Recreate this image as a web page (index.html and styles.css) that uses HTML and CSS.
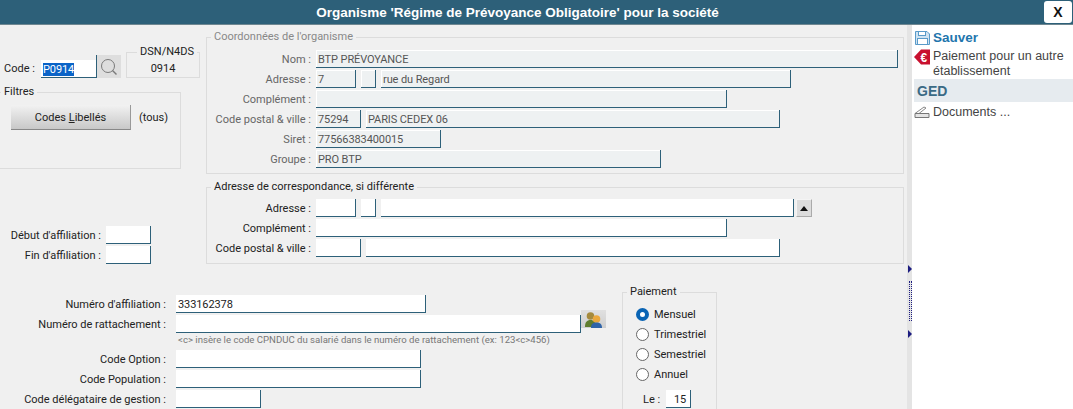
FILE: index.html
```html
<!DOCTYPE html>
<html lang="fr">
<head>
    <meta charset="UTF-8">
    <title>Organisme</title>
    <link rel="stylesheet" href="styles.css">
</head>
<body>
    <div class="titlebar">
        <div class="title">Organisme 'Régime de Prévoyance Obligatoire' pour la société</div>
        <div class="close">X</div>
    </div>

    <div class="main">
        <div class="form">
            <div class="upper">
                <div class="left-col">
                    <div class="code-row">
                        <span class="code-label">Code :</span>
                        <div class="field code-field"><span class="selected">P0914</span></div>
                        <div class="search-btn">
                            <svg width="18" height="18" viewBox="0 0 18 18"><circle cx="8" cy="8" r="6.500" fill="none" stroke="#7a7a7a" stroke-width="1"/><path d="M12.500 12.500L16.500 16.500" stroke="#7a7a7a" stroke-width="1.500"/></svg>
                        </div>
                        <fieldset class="dsn">
                            <legend>DSN/N4DS</legend>
                            <div>0914</div>
                        </fieldset>
                    </div>
                    <fieldset class="filtres">
                        <legend>Filtres</legend>
                        <div class="filtres-row">
                            <div class="big-btn">Codes <u>L</u>ibellés</div>
                            <span>(tous)</span>
                        </div>
                    </fieldset>
                    <div class="dates">
                        <div class="row"><label class="lbl-date">Début d'affiliation :</label><div class="field w45"></div></div>
                        <div class="row"><label class="lbl-date">Fin d'affiliation :</label><div class="field w45"></div></div>
                    </div>
                </div>

                <div class="right-col">
                    <fieldset class="coord">
                        <legend>Coordonnées de l'organisme</legend>
                        <div class="row"><label class="lbl">Nom :</label><div class="field off w582">BTP PRÉVOYANCE</div></div>
                        <div class="row"><label class="lbl">Adresse :</label><div class="field off w40">7</div><div class="field off w15"></div><div class="field off w410">rue du Regard</div></div>
                        <div class="row"><label class="lbl">Complément :</label><div class="field off w411"></div></div>
                        <div class="row"><label class="lbl">Code postal &amp; ville :</label><div class="field off w45">75294</div><div class="field off w414">PARIS CEDEX 06</div></div>
                        <div class="row"><label class="lbl">Siret :</label><div class="field off w125">77566383400015</div></div>
                        <div class="row"><label class="lbl">Groupe :</label><div class="field off w345">PRO BTP</div></div>
                    </fieldset>
                    <fieldset class="corresp">
                        <legend>Adresse de correspondance, si différente</legend>
                        <div class="row"><label class="lbl">Adresse :</label><div class="field w40"></div><div class="field w15"></div><div class="field w413"></div>
                            <div class="up-btn"><svg width="8" height="5" viewBox="0 0 8 5"><path d="M4 0L8 5H0Z" fill="#111"/></svg></div>
                        </div>
                        <div class="row"><label class="lbl">Complément :</label><div class="field w411"></div></div>
                        <div class="row"><label class="lbl">Code postal &amp; ville :</label><div class="field w45"></div><div class="field w414"></div></div>
                    </fieldset>
                </div>
            </div>

            <div class="lower">
                <div class="affil">
                    <div class="row"><label class="lbl-aff">Numéro d'affiliation :</label><div class="field w250">333162378</div></div>
                    <div class="row"><label class="lbl-aff">Numéro de rattachement :</label><div class="field w405"></div>
                        <div class="people-btn">
                            <svg width="25" height="18" viewBox="0 0 25 18"><circle cx="9.500" cy="6" r="3.800" fill="#a58a3c"/><path d="M4 17c0-5 2-7 5.500-7s5.500 2 5.500 7Z" fill="#5f7d2e"/><circle cx="15.500" cy="9" r="3.800" fill="#eaa83c"/><path d="M10 18c0-4 2-5.500 5.500-5.500s5.500 1.500 5.500 5.500Z" fill="#2f64a8"/></svg>
                        </div>
                    </div>
                    <div class="hint">&lt;c&gt; insère le code CPNDUC du salarié dans le numéro de rattachement (ex: 123&lt;c&gt;456)</div>
                    <div class="row"><label class="lbl-aff">Code Option :</label><div class="field w245"></div></div>
                    <div class="row"><label class="lbl-aff">Code Population :</label><div class="field w245"></div></div>
                    <div class="row"><label class="lbl-aff">Code délégataire de gestion :</label><div class="field w85"></div></div>
                </div>
                <fieldset class="paiement">
                    <legend>Paiement</legend>
                    <div class="radio-row"><span class="radio on"></span>Mensuel</div>
                    <div class="radio-row"><span class="radio"></span>Trimestriel</div>
                    <div class="radio-row"><span class="radio"></span>Semestriel</div>
                    <div class="radio-row"><span class="radio"></span>Annuel</div>
                    <div class="le-row"><span>Le :</span><div class="field w25 num">15</div></div>
                </fieldset>
            </div>
        </div>

        <div class="strip">
            <span class="arrow"></span>
            <span class="dots"></span>
            <span class="arrow"></span>
        </div>

        <div class="sidebar">
            <div class="side-item sauver">
                <svg class="side-icon" width="19" height="16" viewBox="0 0 19 16"><path d="M1.500 1.500H13L15.500 4V14.500H1.500Z" fill="#cfe3f2" stroke="#5a9bc9"/><rect x="4.500" y="1.500" width="7" height="4" fill="#fff" stroke="#5a9bc9"/><rect x="3.500" y="8.500" width="10" height="6" fill="#fff" stroke="#5a9bc9"/></svg>
                <span>Sauver</span>
            </div>
            <div class="side-item paie">
                <svg class="side-icon" width="19" height="16" viewBox="0 0 19 16"><path d="M0 8L7 .5H16V15.500H7Z" fill="#c8102e"/><text x="6.500" y="13" font-family="Liberation Sans" font-size="12" font-weight="700" fill="#fff">€</text></svg>
                <span>Paiement pour un autre établissement</span>
            </div>
            <div class="ged">GED</div>
            <div class="side-item docs">
                <svg class="side-icon" width="19" height="14" viewBox="0 0 19 14"><path d="M1 8.500L10 2l2 1-7 5.500" fill="#fff" stroke="#888"/><path d="M1 8.500H15V12.500H1Z" fill="#e4e4e4" stroke="#777"/></svg>
                <span>Documents ...</span>
            </div>
        </div>
    </div>
</body>
</html>
```
FILE: styles.css
```css
html, body {
    margin: 0;
    height: 409px;
    overflow: hidden;
}
body {
    font-family: Roboto, 'Liberation Sans', sans-serif;
    font-size: 11px;
    color: #222;
    background: #f0f0f0;
}
.titlebar {
    height: 24px;
    background: #2d6079;
    border-bottom: 1px solid #6f8791;
    display: flex;
    align-items: center;
    font-family: 'Liberation Sans', sans-serif;
}
.title {
    width: 1035px;
    text-align: center;
    color: white;
    font-weight: bold;
    font-size: 13.5px;
}
.close {
    width: 28px;
    height: 22px;
    margin-left: 9px;
    background: white;
    border-radius: 3px;
    text-align: center;
    line-height: 22px;
    font-weight: bold;
    font-size: 14px;
    color: #111;
}
.main {
    display: flex;
    height: 384px;
}
.form {
    width: 907px;
    flex: none;
}
.upper {
    display: flex;
    height: 240px;
}
.left-col {
    width: 206px;
    flex: none;
}
.right-col {
    width: 698px;
}
fieldset {
    margin: 0;
    padding: 0;
    border: 1px solid #dcdcdc;
    min-width: 0;
}
legend {
    padding: 0 3px;
    line-height: 14px;
    margin-left: 4px;
}

/* champs */
.row {
    display: flex;
    height: 18px;
    margin-bottom: 2px;
    gap: 5px;
    align-items: flex-start;
}
.field {
    height: 18px;
    box-sizing: border-box;
    background: white;
    border-right: 1px solid #2d6079;
    border-bottom: 1px solid #2d6079;
    padding-left: 2px;
    line-height: 19px;
    letter-spacing: -0.1px;
    flex: none;
    white-space: nowrap;
}
.field.off {
    background: #eef1f2;
    color: #555;
    box-shadow: inset 1px 1px 0 white;
}
.w15 { width: 15px; }
.w25 { width: 25px; }
.w40 { width: 40px; }
.w45 { width: 45px; }
.w85 { width: 85px; }
.w125 { width: 125px; }
.w245 { width: 245px; }
.w250 { width: 250px; }
.w345 { width: 345px; }
.w405 { width: 405px; }
.w410 { width: 410px; }
.w411 { width: 411px; }
.w413 { width: 413px; }
.w414 { width: 414px; }
.w582 { width: 582px; }
.lbl {
    width: 104px;
    text-align: right;
    white-space: nowrap;
    line-height: 19px;
}
.lbl-date {
    width: 101px;
    text-align: right;
    white-space: nowrap;
    line-height: 19px;
}
.lbl-aff {
    width: 166px;
    margin-right: 5px;
    text-align: right;
    white-space: nowrap;
    line-height: 19px;
}

/* colonne gauche */
.code-row {
    display: flex;
    align-items: flex-end;
    height: 53px;
}
.code-label {
    margin-left: 4px;
    width: 37px;
    line-height: 18px;
}
.code-field {
    width: 55px;
    height: 18px;
    padding-left: 2px;
    border-right: none;
}
.selected {
    background: #0a64c8;
    color: white;
}
.search-btn {
    width: 25px;
    height: 23px;
    background: #dedede;
    border-left: 1px solid #2d6079;
    box-sizing: border-box;
    display: flex;
    align-items: center;
    justify-content: center;
}
.dsn {
    width: 74px;
    height: 34px;
    margin-left: 5px;
    box-sizing: border-box;
    text-align: center;
}
.dsn legend {
    margin-left: 4px;
    line-height: 16px;
}
.dsn div {
    line-height: 16px;
    margin-top: 1px;
}
.filtres {
    width: 185px;
    height: 84px;
    margin: 7px 0 0 -4px;
    box-sizing: border-box;
}
.filtres-row {
    display: flex;
    align-items: center;
    gap: 8px;
    margin: 6px 0 0 14px;
}
.big-btn {
    width: 120px;
    height: 25px;
    line-height: 26px;
    text-align: center;
    background: linear-gradient(#f2f2f2, #c8c8c8);
    border-bottom: 1px solid #888;
    border-right: 1px solid #999;
    box-sizing: border-box;
}
.dates {
    margin-top: 57px;
}

/* colonne droite */
.coord {
    margin-top: 5px;
    height: 144px;
    box-sizing: border-box;
    color: #666;
    padding-top: 6px;
}
.coord legend {
    color: #888;
}
.corresp {
    margin-top: 6px;
    height: 84px;
    box-sizing: border-box;
    padding-top: 5px;
}
.up-btn {
    width: 16px;
    height: 18px;
    margin-left: -3px;
    background: #dcdcdc;
    box-sizing: border-box;
    border: 1px solid #f4f4f4;
    border-right-color: #aaa;
    border-bottom-color: #aaa;
    display: flex;
    align-items: center;
    justify-content: center;
}

/* partie basse */
.lower {
    display: flex;
    margin-top: 30px;
}
.affil {
    width: 622px;
    flex: none;
}
.people-btn {
    width: 25px;
    height: 18px;
    margin: -5px 0 0 -5px;
    background: linear-gradient(#e0e0e0, #cfcfcf);
    overflow: hidden;
}
.hint {
    font-size: 9.6px;
    color: #777;
    margin-left: 178px;
    height: 15px;
    line-height: 10px;
}
.paiement {
    width: 95px;
    height: 140px;
    box-sizing: border-box;
    margin-top: -10px;
}
.radio-row {
    display: flex;
    align-items: center;
    height: 20px;
    margin-left: 13px;
    gap: 5px;
}
.radio-row:first-of-type {
    margin-top: 5px;
}
.radio {
    width: 11px;
    height: 11px;
    border: 1px solid #666;
    border-radius: 50%;
    background: white;
    flex: none;
}
.radio.on {
    border: 4px solid #0a64b4;
    width: 5px;
    height: 5px;
}
.le-row {
    display: flex;
    align-items: center;
    gap: 6px;
    margin: 6px 0 0 20px;
}
.num {
    text-align: right;
    padding-right: 4px;
}

/* bandeau et menu de droite */
.strip {
    width: 5px;
    flex: none;
    box-sizing: border-box;
    background: #e4e4e4;
    display: flex;
    flex-direction: column;
    align-items: flex-start;
    padding: 240px 0 0 1px;
    gap: 8px;
}
.arrow {
    width: 0;
    height: 0;
    border-left: 4px solid #1c1c80;
    border-top: 4px solid transparent;
    border-bottom: 4px solid transparent;
}
.dots {
    width: 3px;
    height: 40px;
    margin: 0 0 1px 1px;
    border-left: 1px dotted #1c1c80;
    border-right: 1px dotted #1c1c80;
    box-sizing: border-box;
}
.sidebar {
    flex: 1;
    background: white;
    padding-top: 5px;
    padding-left: 2px;
    font-family: 'Liberation Sans', sans-serif;
}
.side-item {
    display: flex;
    align-items: flex-start;
    font-size: 12.5px;
    color: #444;
    line-height: 15px;
    padding-right: 6px;
}
.side-icon {
    flex: none;
}
.sauver {
    color: #1f76ad;
    font-weight: bold;
    font-size: 13.5px;
    height: 16px;
}
.paie {
    margin-top: 3px;
}
.ged {
    height: 23px;
    line-height: 24px;
    background: #e6ebef;
    color: #3a6a85;
    font-weight: bold;
    font-size: 14px;
    padding-left: 3px;
}
.docs {
    margin-top: 3px;
}
```
